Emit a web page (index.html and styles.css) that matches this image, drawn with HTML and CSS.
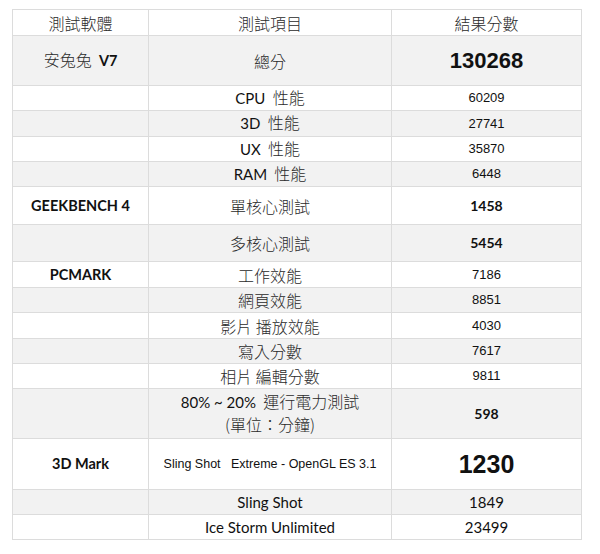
FILE: index.html
```html
<!DOCTYPE html>
<html lang="zh-Hant">
<head>
<meta charset="utf-8">
<title>跑分結果</title>
<link rel="stylesheet" href="styles.css">
</head>
<body>
<table class="scores">
  <colgroup><col class="c1"><col class="c2"><col class="c3"></colgroup>
  <thead>
    <tr class="r-head"><th class="zh">測試軟體</th><th class="zh">測試項目</th><th class="zh">結果分數</th></tr>
  </thead>
  <tbody>
    <tr class="odd r50"><td><span class="zh">安兔兔</span>&nbsp; <b class="cal">V7</b></td><td class="zh">總分</td><td class="big">130268</td></tr>
    <tr class="r25"><td></td><td><span class="cal">CPU</span>&nbsp; <span class="zh">性能</span></td><td class="ar">60209</td></tr>
    <tr class="odd r26"><td></td><td><span class="cal">3D</span>&nbsp; <span class="zh">性能</span></td><td class="ar">27741</td></tr>
    <tr class="r25"><td></td><td><span class="cal">UX</span>&nbsp; <span class="zh">性能</span></td><td class="ar">35870</td></tr>
    <tr class="odd r25"><td></td><td><span class="cal">RAM</span>&nbsp; <span class="zh">性能</span></td><td class="ar">6448</td></tr>
    <tr class="r38"><td class="cal bold">GEEKBENCH 4</td><td class="zh">單核心測試</td><td class="cal bold num">1458</td></tr>
    <tr class="odd r37"><td></td><td class="zh">多核心測試</td><td class="cal bold num">5454</td></tr>
    <tr class="r26"><td class="cal bold">PCMARK</td><td class="zh">工作效能</td><td class="ar">7186</td></tr>
    <tr class="odd r25"><td></td><td class="zh">網頁效能</td><td class="ar">8851</td></tr>
    <tr class="r26"><td></td><td class="zh">影片 播放效能</td><td class="ar">4030</td></tr>
    <tr class="odd r25"><td></td><td class="zh">寫入分數</td><td class="ar">7617</td></tr>
    <tr class="r25"><td></td><td class="zh">相片 編輯分數</td><td class="ar">9811</td></tr>
    <tr class="odd r50"><td></td><td class="two"><span class="cal">80% ~ 20%</span>&nbsp; <span class="zh">運行電力測試</span><br><span class="zh">(單位：分鐘)</span></td><td class="cal bold num">598</td></tr>
    <tr class="r51"><td class="cal bold">3D Mark</td><td class="ar small">Sling Shot &nbsp;&nbsp;Extreme - OpenGL ES 3.1</td><td class="big2">1230</td></tr>
    <tr class="odd r25"><td></td><td class="cal">Sling Shot</td><td class="cal">1849</td></tr>
    <tr class="r25"><td></td><td class="cal">Ice Storm Unlimited</td><td class="cal">23499</td></tr>
  </tbody>
</table>
</body>
</html>
```
FILE: styles.css
```css
html, body {
  margin: 0;
  padding: 0;
  background: #ffffff;
}
body {
  font-family: "Liberation Sans", Arial, "Noto Sans CJK TC", sans-serif;
  color: #111;
}
.scores {
  margin: 9px 0 0 12px;
  width: 569px;
  table-layout: fixed;
  border-collapse: collapse;
}
.c1 { width: 136px; }
.c2 { width: 243px; }
.c3 { width: 190px; }
.scores th, .scores td {
  border: 1px solid #dcdcdc;
  padding: 0;
  text-align: center;
  vertical-align: middle;
  font-weight: normal;
  font-size: 13px;
  line-height: 18px;
}
.scores tr.odd td { background: #f2f2f2; }
.r-head th { height: 25px; }
.r25 td { height: 24px; }
.r26 td { height: 25px; }
.r37 td { height: 36px; }
.r38 td { height: 37px; }
.r50 td { height: 49px; }
.r51 td { height: 50px; }
.scores .zh {
  font-family: "Noto Sans CJK TC", sans-serif;
  font-weight: 300;
  font-size: 16px;
  color: #2a2a2a;
}
.scores .cal {
  font-family: Lato, "Open Sans", sans-serif;
  font-size: 15px;
  color: #111;
}
.scores .bold, .scores b.cal { font-weight: bold; font-size: 14.5px; }
.scores .num { font-size: 14px; }
.scores .ar { font-size: 13px; color: #111; }
.scores .small { font-size: 12.5px; }
.scores .big { font-size: 22px; font-weight: bold; }
.scores .big2 { font-size: 25px; font-weight: bold; }
.scores .two { line-height: 21px; }
.scores .two .zh, .scores .two .cal { line-height: 21px; }
```
